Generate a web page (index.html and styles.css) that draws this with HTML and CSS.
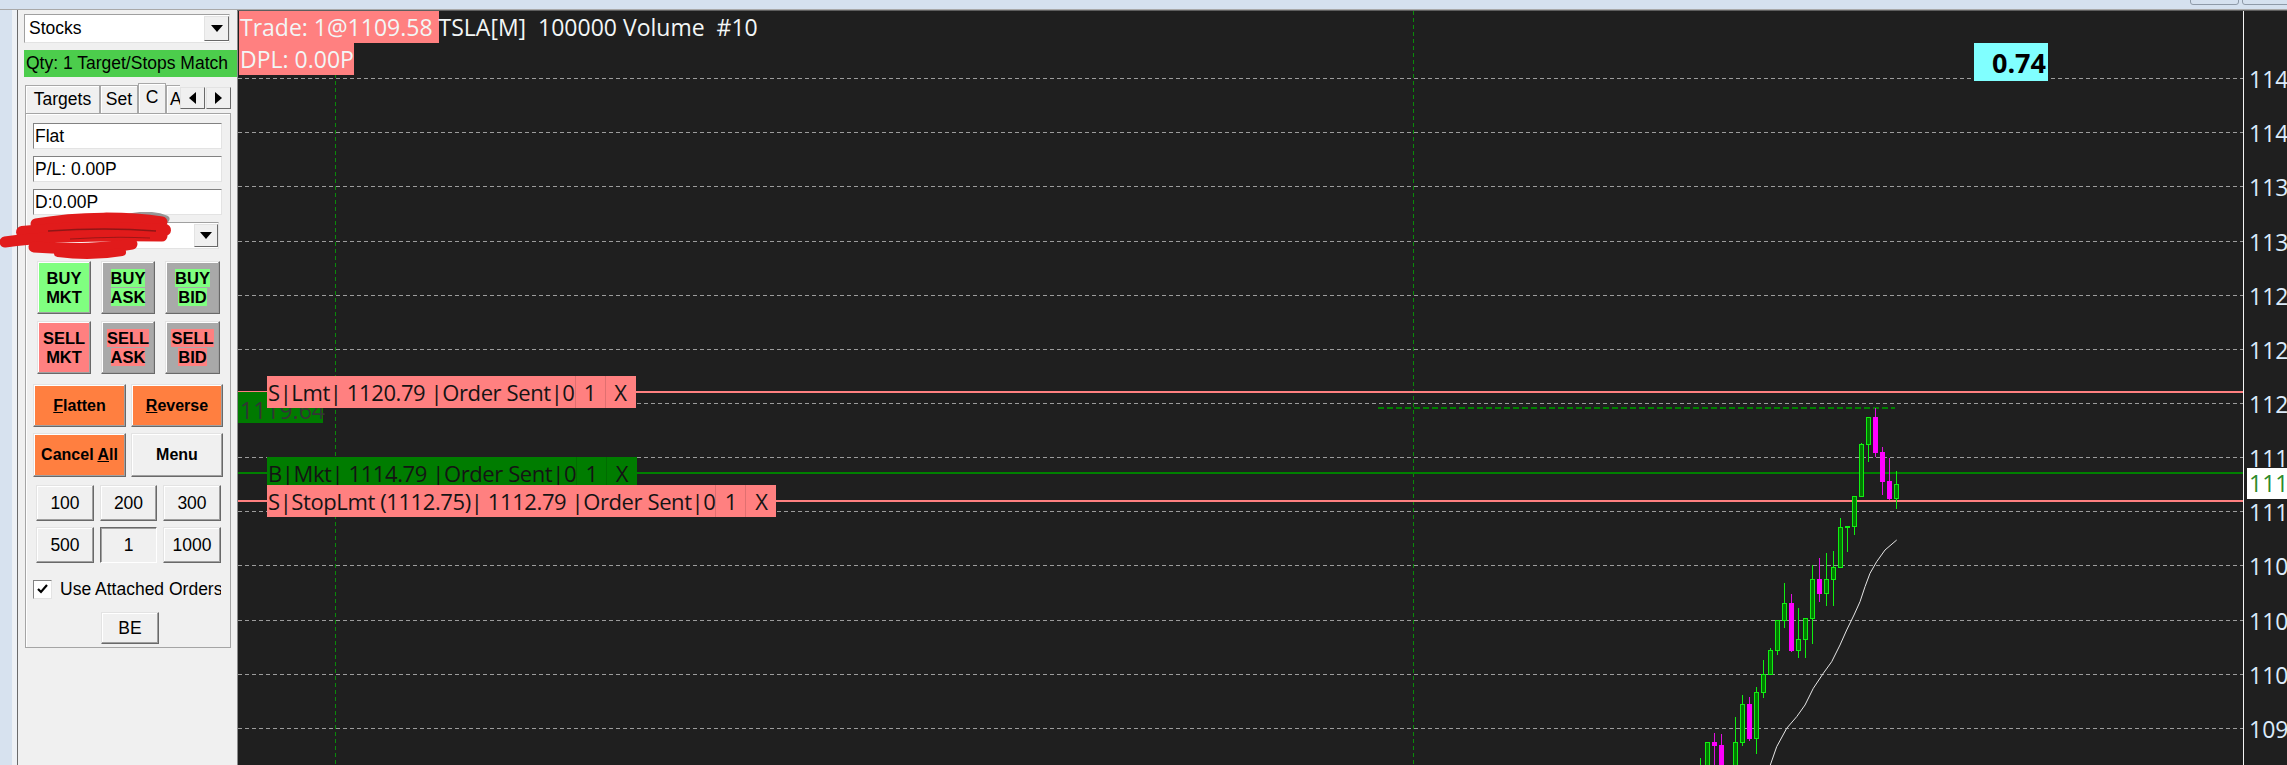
FILE: index.html
```html
<!DOCTYPE html>
<html lang="en">
<head>
    <meta charset="UTF-8">
    <meta name="viewport" content="width=device-width, initial-scale=1.0">
    <title>Chart Trader - TSLA</title>
    <link rel="stylesheet" href="styles.css">
</head>
<body>

    <div class="titlebar">
        <span class="winbtn first"></span>
        <span class="winbtn last"></span>
    </div>

    <main class="workspace">

        <div class="sidegrip"></div>

        <aside class="trader">
            <div class="combo stocks">
                <span>Stocks</span>
                <span class="dropbtn"><i class="tri-down"></i></span>
            </div>

            <div class="qtymatch">Qty: 1 Target/Stops Match</div>

            <div class="tabs">
                <div class="tabstrip">
                    <span class="tab t-targets">Targets</span>
                    <span class="tab t-set">Set</span>
                    <span class="tab t-c">C</span>
                    <span class="tab t-a">A</span>
                </div>
                <span class="spin"><i class="tri-left"></i></span>
                <span class="spin"><i class="tri-right"></i></span>
            </div>

            <div class="tabpanel">
                <div class="field">Flat</div>
                <div class="field">P/L: 0.00P</div>
                <div class="field">D:0.00P</div>
                <div class="combo account">
                    <span></span>
                    <span class="dropbtn"><i class="tri-down"></i></span>
                </div>

                <div class="btngrid">
                    <button class="tradebtn buy">BUY<br>MKT</button>
                    <button class="tradebtn quote"><span class="buyhl">BUY<br>ASK</span></button>
                    <button class="tradebtn quote"><span class="buyhl">BUY<br>BID</span></button>
                    <button class="tradebtn sell">SELL<br>MKT</button>
                    <button class="tradebtn quote"><span class="sellhl">SELL<br>ASK</span></button>
                    <button class="tradebtn quote"><span class="sellhl">SELL<br>BID</span></button>
                </div>

                <div class="actions">
                    <button class="actbtn orange"><u>F</u>latten</button>
                    <button class="actbtn orange"><u>R</u>everse</button>
                    <button class="actbtn orange">Cancel <u>A</u>ll</button>
                    <button class="actbtn">Menu</button>
                </div>

                <div class="qtygrid">
                    <button class="qty">100</button>
                    <button class="qty">200</button>
                    <button class="qty">300</button>
                    <button class="qty">500</button>
                    <button class="qty down">1</button>
                    <button class="qty">1000</button>
                </div>

                <label class="attach">
                    <span class="checkbox">
                        <svg width="17" height="17" viewBox="0 0 17 17"><path d="M4 8 L7 11 L13 4" fill="none" stroke="#000" stroke-width="2.2"/></svg>
                    </span>
                    Use Attached Orders
                </label>

                <button class="qty be">BE</button>
            </div>
        </aside>

        <!-- account name scribbled out -->
        <svg class="scribble" width="172" height="50" viewBox="0 0 172 50">
            <path d="M122 7 C138 2 155 2 166 7" stroke="#6f6f6f" stroke-width="7" fill="none" opacity=".7" stroke-linecap="round"/>
            <path d="M36 12 C80 4 130 5 162 10" stroke="#e11b1b" stroke-width="11" fill="none" stroke-linecap="round"/>
            <path d="M22 20 C70 15 120 15 165 18" stroke="#e11b1b" stroke-width="12" fill="none" stroke-linecap="round"/>
            <path d="M5 30 C40 25 100 23 162 24" stroke="#e11b1b" stroke-width="11" fill="none" stroke-linecap="round"/>
            <path d="M34 35 C70 38 110 36 132 32" stroke="#e11b1b" stroke-width="11" fill="none" stroke-linecap="round"/>
            <path d="M58 41 C80 44 105 43 122 40" stroke="#e11b1b" stroke-width="8" fill="none" stroke-linecap="round"/>
            <path d="M48 19 C90 16 120 16 156 19" stroke="#4a1212" stroke-width="1.5" fill="none" opacity=".55"/>
            <path d="M70 27 C100 25 130 25 150 26" stroke="#4a1212" stroke-width="1.2" fill="none" opacity=".45"/>
        </svg>

        <section class="chart">
            <svg class="plot" width="2049" height="754" viewBox="238 11 2049 754">
                <g class="grid">
                    <line x1="238" x2="2247" y1="78.5" y2="78.5"/>
                    <line x1="238" x2="2247" y1="132.5" y2="132.5"/>
                    <line x1="238" x2="2247" y1="186.5" y2="186.5"/>
                    <line x1="238" x2="2247" y1="241.5" y2="241.5"/>
                    <line x1="238" x2="2247" y1="295.5" y2="295.5"/>
                    <line x1="238" x2="2247" y1="349.5" y2="349.5"/>
                    <line x1="238" x2="2247" y1="403.5" y2="403.5"/>
                    <line x1="238" x2="2247" y1="457.5" y2="457.5"/>
                    <line x1="238" x2="2247" y1="511.5" y2="511.5"/>
                    <line x1="238" x2="2247" y1="565.5" y2="565.5"/>
                    <line x1="238" x2="2247" y1="620.5" y2="620.5"/>
                    <line x1="238" x2="2247" y1="674.5" y2="674.5"/>
                    <line x1="238" x2="2247" y1="728.5" y2="728.5"/>
                </g>

                <!-- session breaks -->
                <line class="session" x1="335.5" x2="335.5" y1="11" y2="765"/>
                <line class="session" x1="1413.5" x2="1413.5" y1="11" y2="765"/>

                <line class="hi-mark" x1="1378" x2="1895" y1="408" y2="408"/>

                <!-- working orders -->
                <line class="ord-sell" x1="238" x2="2243" y1="392" y2="392"/>
                <line class="ord-buy" x1="238" x2="2243" y1="473" y2="473"/>
                <line class="ord-sell" x1="238" x2="2243" y1="501" y2="501"/>

                <!-- 20 period average -->
                <polyline class="avg" points="1769,768 1770.3,765 1776.7,746.7 1786.7,728.3 1796.7,716.7 1805,705 1813.3,688.3 1823.3,673.3 1831.7,661.7 1840,645 1846.7,630 1854,615 1860,601.7 1865,586.7 1870,573.3 1876.7,561.7 1885,550 1896.7,540"/>

                <g class="wick-up">
                    <line x1="1700.5" x2="1700.5" y1="758" y2="770"/>
                    <line x1="1707.5" x2="1707.5" y1="742" y2="780"/>
                    <line x1="1735.5" x2="1735.5" y1="717" y2="770"/>
                    <line x1="1742.5" x2="1742.5" y1="695" y2="746"/>
                    <line x1="1756.5" x2="1756.5" y1="687" y2="754"/>
                    <line x1="1763.5" x2="1763.5" y1="660" y2="698"/>
                    <line x1="1770.5" x2="1770.5" y1="648" y2="675"/>
                    <line x1="1777.5" x2="1777.5" y1="620" y2="655"/>
                    <line x1="1784.5" x2="1784.5" y1="583" y2="628"/>
                    <line x1="1798.5" x2="1798.5" y1="608" y2="658"/>
                    <line x1="1805.5" x2="1805.5" y1="618" y2="658"/>
                    <line x1="1812.5" x2="1812.5" y1="565" y2="644"/>
                    <line x1="1826.5" x2="1826.5" y1="553" y2="606"/>
                    <line x1="1833.5" x2="1833.5" y1="551" y2="606"/>
                    <line x1="1840.5" x2="1840.5" y1="518" y2="568"/>
                    <line x1="1847.5" x2="1847.5" y1="526" y2="552"/>
                    <line x1="1854.5" x2="1854.5" y1="496" y2="535"/>
                    <line x1="1861.5" x2="1861.5" y1="443" y2="497"/>
                    <line x1="1868.5" x2="1868.5" y1="417" y2="462"/>
                    <line x1="1896.5" x2="1896.5" y1="471" y2="509"/>
                </g>
                <g class="wick-down">
                    <line x1="1714.5" x2="1714.5" y1="733" y2="770"/>
                    <line x1="1721.5" x2="1721.5" y1="734" y2="770"/>
                    <line x1="1749.5" x2="1749.5" y1="697" y2="741"/>
                    <line x1="1791.5" x2="1791.5" y1="594" y2="652"/>
                    <line x1="1819.5" x2="1819.5" y1="558" y2="602"/>
                    <line x1="1875.5" x2="1875.5" y1="408" y2="457"/>
                    <line x1="1882.5" x2="1882.5" y1="447" y2="495"/>
                    <line x1="1889.5" x2="1889.5" y1="458" y2="500"/>
                </g>
                <g class="body-up">
                    <rect x="1705.5" y="742.5" width="4" height="30"/>
                    <rect x="1733.5" y="742.5" width="4" height="30"/>
                    <rect x="1740.5" y="704.5" width="4" height="38"/>
                    <rect x="1754.5" y="692.5" width="4" height="46"/>
                    <rect x="1761.5" y="674.5" width="4" height="18"/>
                    <rect x="1768.5" y="650.5" width="4" height="24"/>
                    <rect x="1775.5" y="620.5" width="4" height="30"/>
                    <rect x="1782.5" y="603.5" width="4" height="17"/>
                    <rect x="1796.5" y="639.5" width="4" height="11"/>
                    <rect x="1803.5" y="618.5" width="4" height="21"/>
                    <rect x="1810.5" y="579.5" width="4" height="39"/>
                    <rect x="1824.5" y="579.5" width="4" height="14"/>
                    <rect x="1831.5" y="567.5" width="4" height="12"/>
                    <rect x="1838.5" y="527.5" width="4" height="40"/>
                    <rect x="1845.5" y="526.5" width="4" height="1"/>
                    <rect x="1852.5" y="496.5" width="4" height="30"/>
                    <rect x="1859.5" y="444.5" width="4" height="52"/>
                    <rect x="1866.5" y="417.5" width="4" height="27"/>
                    <rect x="1894.5" y="484.5" width="4" height="14"/>
                </g>
                <g class="body-down">
                    <rect x="1712" y="742" width="5" height="4"/>
                    <rect x="1719" y="745" width="5" height="30"/>
                    <rect x="1747" y="704" width="5" height="35"/>
                    <rect x="1789" y="603" width="5" height="48"/>
                    <rect x="1817" y="579" width="5" height="15"/>
                    <rect x="1873" y="417" width="5" height="36"/>
                    <rect x="1880" y="452" width="5" height="30"/>
                    <rect x="1887" y="481" width="5" height="18"/>
                </g>

                <line class="axis" x1="2243.5" x2="2243.5" y1="11" y2="765"/>
            </svg>

            <div class="chart-head">
                <div class="line"><span class="hl">Trade: 1@1109.58 </span>TSLA[M]  100000 Volume  #10</div>
                <div class="line"><span class="hl">DPL: 0.00P</span></div>
            </div>

            <div class="ratio">0.74</div>

            <div class="last-fill">1119.64</div>

            <div class="order sell row1">
                <span class="cell main">S|Lmt| 1120.79 |Order Sent|0</span>
                <span class="cell n">1</span>
                <span class="cell x">X</span>
            </div>
            <div class="order buy row2">
                <span class="cell main">B|Mkt| 1114.79 |Order Sent|0</span>
                <span class="cell n">1</span>
                <span class="cell x">X</span>
            </div>
            <div class="order sell row3">
                <span class="cell main">S|StopLmt (1112.75)| 1112.79 |Order Sent|0</span>
                <span class="cell n">1</span>
                <span class="cell x">X</span>
            </div>

            <div class="prices">
                <span class="price" style="top:54px">1144.00</span>
                <span class="price" style="top:108px">1140.00</span>
                <span class="price" style="top:162px">1136.00</span>
                <span class="price" style="top:217px">1132.00</span>
                <span class="price" style="top:271px">1128.00</span>
                <span class="price" style="top:325px">1124.00</span>
                <span class="price" style="top:379px">1120.00</span>
                <span class="price" style="top:433px">1116.00</span>
                <span class="price" style="top:487px">1112.00</span>
                <span class="price" style="top:541px">1108.00</span>
                <span class="price" style="top:596px">1104.00</span>
                <span class="price" style="top:650px">1100.00</span>
                <span class="price" style="top:704px">1096.00</span>
                <span class="price current">1113.99</span>
            </div>
        </section>

    </main>

</body>
</html>
```

FILE: styles.css
```css
*{
    box-sizing: border-box;
}

body{
    margin: 0;
    width: 2287px;
    height: 765px;
    overflow: hidden;
    background-color: #d6e1ee;
    font-family: "Liberation Sans", Arial, sans-serif;
}

.titlebar{
    position: relative;
    height: 10px;
    background-color: #d5e1ef;
    border-bottom: 1px solid #a9a9a9;
}

.winbtn{
    position: absolute;
    top: -1px;
    height: 6px;
    border: 1px solid #8e9aa8;
    border-radius: 0 0 3px 3px;
}

.winbtn.first{ left: 2190px; width: 49px; }
.winbtn.last{ left: 2242px; width: 50px; }

.workspace{
    position: relative;
    display: flex;
    height: 755px;
}

.sidegrip{
    width: 18px;
    background: linear-gradient(to right, #d7e2ef 12px, #eef1f5 12px);
    border-right: 1px solid #6b6b6b;
}

/* ---------- order entry panel ---------- */

.trader{
    width: 219px;
    padding-top: 4px;
    background-color: #f0f0f0;
    font-size: 17.5px;
    color: #000;
}

.combo{
    display: flex;
    align-items: center;
    justify-content: space-between;
    background-color: #fff;
    border: 1px solid;
    border-color: #a0a0a0 #e3e3e3 #e3e3e3 #a0a0a0;
    padding-left: 4px;
}

.stocks{
    margin-left: 6px;
    width: 206px;
    height: 29px;
}

.account{
    width: 186px;
    height: 27px;
}

.dropbtn{
    display: flex;
    align-items: center;
    justify-content: center;
    width: 25px;
    height: 25px;
    background-color: #f0f0f0;
    border: 1px solid;
    border-color: #e3e3e3 #696969 #696969 #e3e3e3;
}

.account .dropbtn{
    width: 24px;
    height: 23px;
}

.tri-down{
    border-left: 6px solid transparent;
    border-right: 6px solid transparent;
    border-top: 7px solid #000;
}

.tri-left{
    border-top: 6px solid transparent;
    border-bottom: 6px solid transparent;
    border-right: 7px solid #000;
}

.tri-right{
    border-top: 6px solid transparent;
    border-bottom: 6px solid transparent;
    border-left: 7px solid #000;
}

.qtymatch{
    margin: 7px 0 0 6px;
    height: 27px;
    padding-left: 2px;
    line-height: 27px;
    background-color: #4ccd4c;
    white-space: nowrap;
    overflow: hidden;
}

.tabs{
    display: flex;
    margin: 6px 0 0 7px;
    width: 206px;
    height: 30px;
}

.tabstrip{
    display: flex;
    align-items: flex-end;
    width: 155px;
    overflow: hidden;
}

.tab{
    flex: none;
    height: 28px;
    line-height: 27px;
    text-align: center;
    background-color: #f0f0f0;
    border: 1px solid #a8a8a8;
    border-bottom: none;
    box-shadow: inset 1px 1px #fff;
}

.t-targets{ width: 75px; }
.t-set{ width: 38px; }
.t-c{ width: 28px; height: 30px; }
.t-a{ width: 30px; text-align: left; padding-left: 3px; }

.spin{
    display: flex;
    align-items: center;
    justify-content: center;
    width: 25px;
    height: 22px;
    margin-top: 4px;
    background-color: #f0f0f0;
    border: 1px solid;
    border-color: #e3e3e3 #696969 #696969 #e3e3e3;
}

.spin + .spin{
    margin-left: 1px;
}

.tabpanel{
    margin-left: 7px;
    width: 206px;
    height: 535px;
    padding: 9px 0 0 7px;
    border: 1px solid #a5a5a5;
    box-shadow: inset 1px 1px #fff;
}

.field{
    width: 189px;
    height: 26px;
    margin-bottom: 7px;
    padding-left: 1px;
    line-height: 24px;
    background-color: #fff;
    border: 1px solid;
    border-color: #828282 #e3e3e3 #e3e3e3 #828282;
}

button{
    font-family: inherit;
    color: #000;
    padding: 0;
    border: 1px solid;
    border-color: #e3e3e3 #696969 #696969 #e3e3e3;
    box-shadow: inset -1px -1px #a0a0a0, inset 1px 1px #fff;
}

.btngrid{
    display: grid;
    grid-template-columns: 54px 54px 55px;
    grid-auto-rows: 53px;
    column-gap: 10px;
    row-gap: 7px;
    margin: 12px 0 0 4px;
}

.tradebtn{
    font-size: 16.5px;
    font-weight: bold;
    line-height: 19px;
}

.tradebtn.buy{ background-color: #80ff80; }
.tradebtn.sell{ background-color: #ff8080; }
.tradebtn.quote{ background-color: #a9a9a9; }

.buyhl{ background-color: #80ff80; }
.sellhl{ background-color: #ff8080; }

.actions{
    display: grid;
    grid-template-columns: 93px 92px;
    grid-template-rows: 43px 44px;
    column-gap: 5px;
    row-gap: 6px;
    margin-top: 10px;
}

.actbtn{
    font-size: 16px;
    font-weight: bold;
    background-color: #f0f0f0;
}

.actbtn.orange{
    background-color: #ff7f40;
}

.qtygrid{
    display: grid;
    grid-template-columns: 58px 57px 58px;
    grid-auto-rows: 36px;
    column-gap: 6px;
    row-gap: 6px;
    margin: 8px 0 0 3px;
}

.qty{
    font-size: 17.5px;
    background-color: #f0f0f0;
}

.qty.down{
    border-color: #696969 #fff #fff #696969;
    box-shadow: inset 1px 1px #a0a0a0;
}

.attach{
    display: flex;
    align-items: center;
    gap: 8px;
    width: 188px;
    height: 19px;
    margin-top: 17px;
    white-space: nowrap;
    overflow: hidden;
}

.checkbox{
    flex: none;
    width: 19px;
    height: 19px;
    background-color: #fff;
    border: 1px solid;
    border-color: #828282 #e3e3e3 #e3e3e3 #828282;
}

.checkbox svg{
    display: block;
}

.be{
    display: block;
    width: 58px;
    height: 32px;
    margin: 13px 0 0 68px;
}

.scribble{
    position: absolute;
    left: 0;
    top: 202px;
}

/* ---------- chart ---------- */

.chart{
    position: relative;
    flex: 1;
    background-color: #1f1f1f;
    border-top: 1px solid #5e5e5e;
    border-left: 1px solid #8c8c8c;
    overflow: hidden;
    font-family: "Open Sans", "Noto Sans", sans-serif;
}

.plot{
    position: absolute;
    left: 0;
    top: 0;
}

.grid line{
    stroke: #9c9c9c;
    stroke-width: 1;
    stroke-dasharray: 4 3;
}

.session{
    stroke: #0a8a0a;
    stroke-width: 1;
    stroke-dasharray: 4 3;
}

.hi-mark{
    stroke: #008000;
    stroke-width: 2;
    stroke-dasharray: 6 3;
}

.ord-sell{
    stroke: #ff8080;
    stroke-width: 2;
}

.ord-buy{
    stroke: #008000;
    stroke-width: 2;
}

.avg{
    fill: none;
    stroke: #e6e6e6;
    stroke-width: 1;
}

.wick-up line{ stroke: #10ee10; stroke-width: 1; }
.wick-down line{ stroke: #e010e0; stroke-width: 1; }

.body-up rect{
    fill: #007a00;
    stroke: #12ee12;
    stroke-width: 1;
}

.body-down rect{
    fill: #ff00ff;
}

.axis{
    stroke: #f4f4f4;
    stroke-width: 1;
}

.chart-head{
    position: absolute;
    left: 1px;
    top: 0;
    font-size: 23px;
    line-height: 32px;
    color: #f2f6f6;
}

.chart-head .line{
    height: 32px;
    white-space: pre;
}

.chart-head .hl{
    display: inline-block;
    padding-left: 1px;
    background-color: #ff8080;
}

.ratio{
    position: absolute;
    left: 1736px;
    top: 32px;
    width: 74px;
    height: 38px;
    padding-right: 2px;
    background-color: #80ffff;
    color: #000;
    font-size: 27px;
    font-weight: bold;
    line-height: 40px;
    text-align: right;
}

.last-fill{
    position: absolute;
    left: 0;
    top: 381px;
    width: 85px;
    height: 31px;
    padding-left: 2px;
    background-color: #007a00;
    color: #343434;
    font-size: 23px;
    line-height: 36px;
}

.order{
    position: absolute;
    left: 29px;
    display: flex;
    height: 32px;
    font-size: 22px;
    line-height: 32px;
    color: #141414;
}

.order.sell{ background-color: #ff8080; }
.order.buy{ background-color: #007c00; }

.row1{ top: 365px; }
.row2{ top: 446px; }
.row3{ top: 474px; }

.cell.main{
    padding-left: 1px;
    letter-spacing: -0.4px;
    white-space: pre;
}

.cell.n{
    width: 30px;
    text-align: center;
    border-left: 1px solid rgba(0, 0, 0, 0.12);
}

.cell.x{
    width: 31px;
    text-align: center;
    border-left: 1px solid rgba(0, 0, 0, 0.12);
}

.price{
    position: absolute;
    left: 2011px;
    font-size: 23px;
    line-height: 28px;
    color: #dcebfa;
    white-space: nowrap;
}

.price.current{
    left: 2009px;
    top: 457px;
    width: 60px;
    height: 31px;
    padding-left: 2px;
    line-height: 31px;
    background-color: #fff;
    color: #2a8a2a;
}
```
